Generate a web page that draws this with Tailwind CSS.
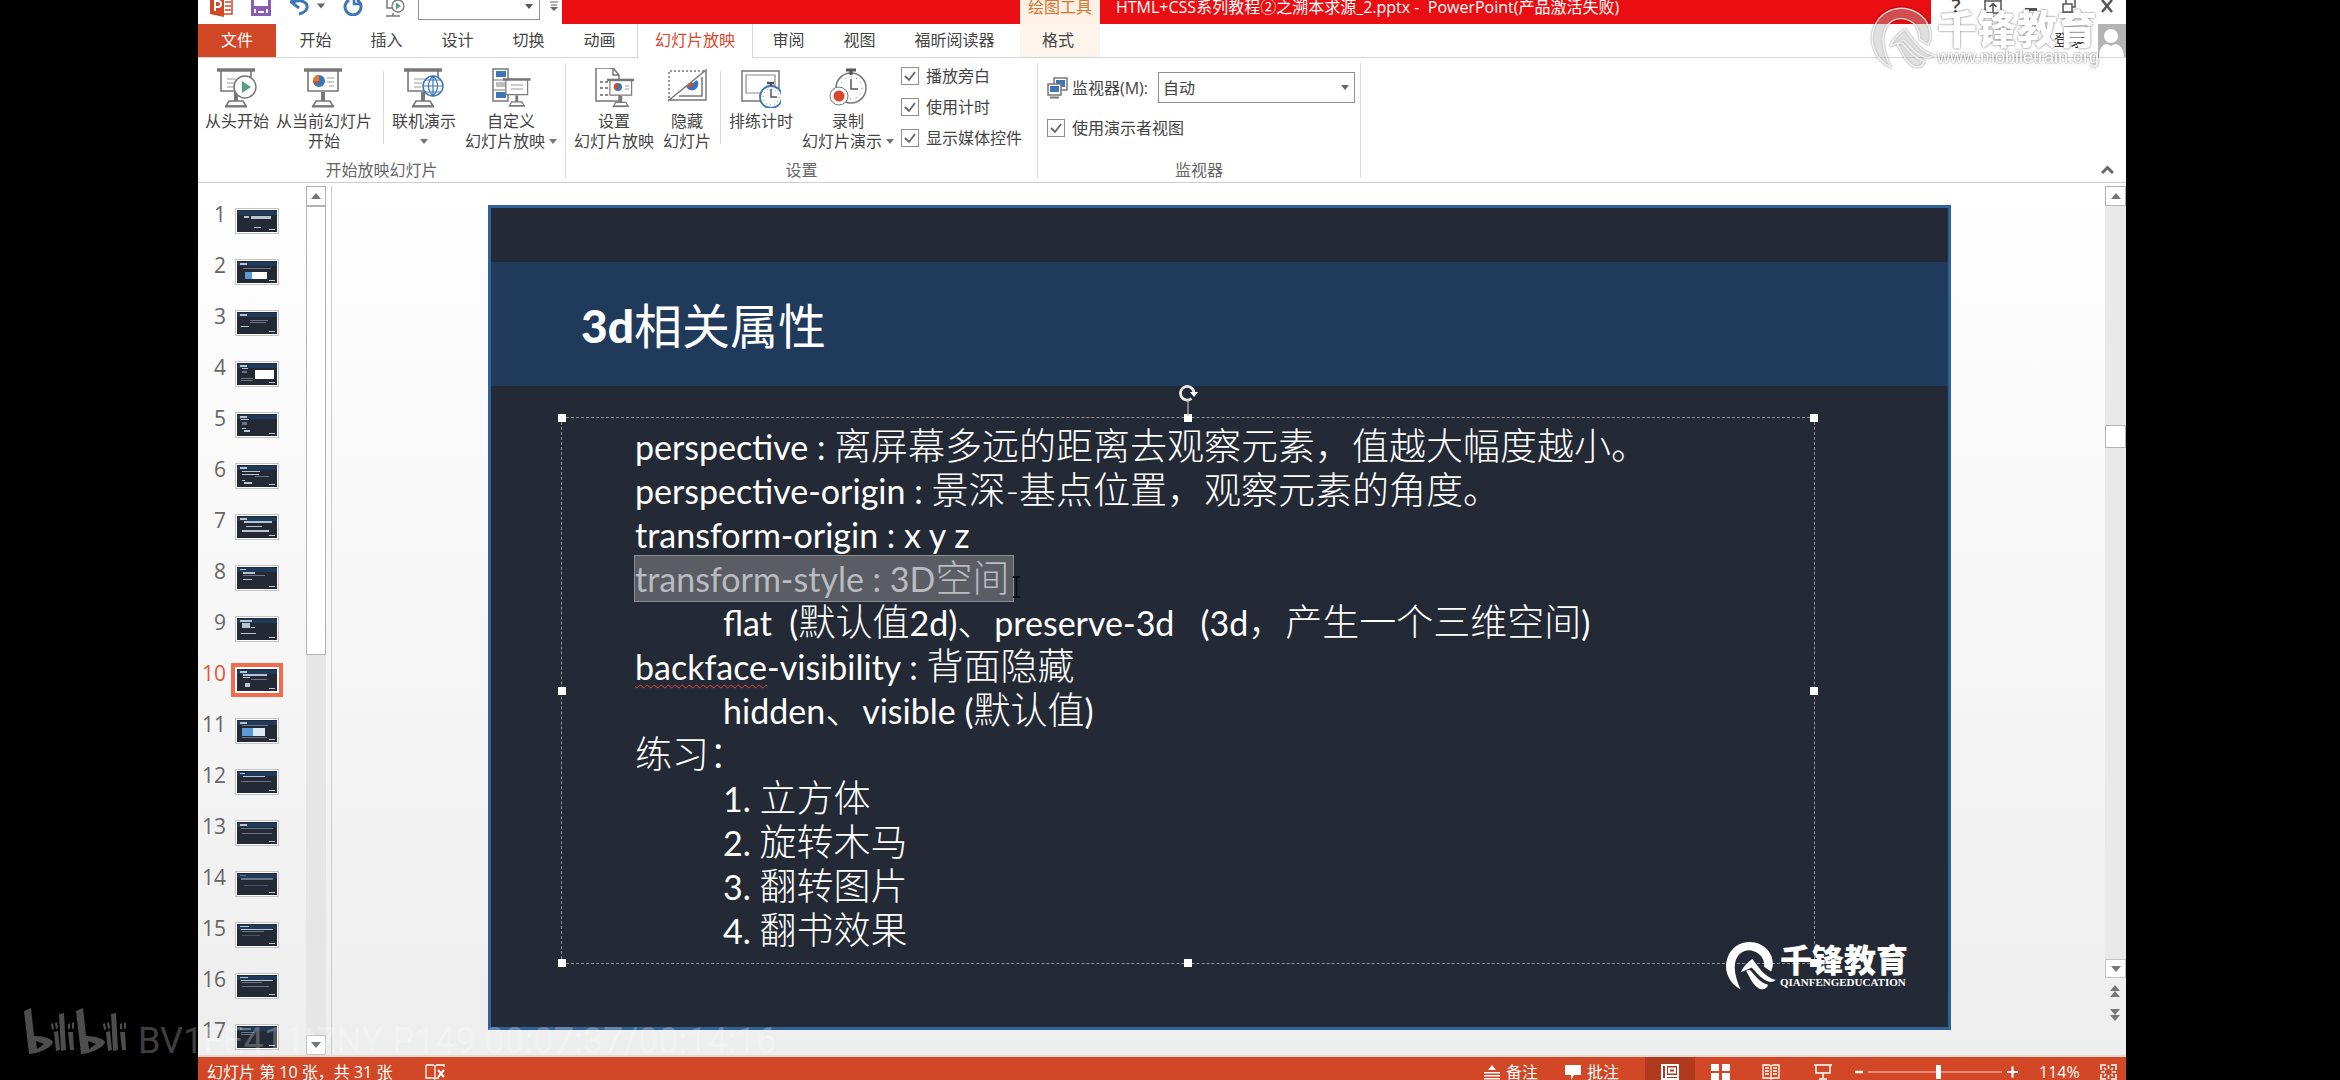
<!DOCTYPE html>
<html lang="zh-CN">
<head>
<meta charset="utf-8">
<title>HTML+CSS系列教程②之溯本求源_2.pptx - PowerPoint</title>
<script src="https://cdn.jsdelivr.net/npm/@tailwindcss/browser@4"></script>
</head>
<body class="relative h-screen overflow-hidden bg-black pl-[198px] pr-[214px] font-['Open_Sans','Noto_Sans_CJK_SC',sans-serif] text-base leading-5 text-[#444444]">

<svg class="hidden" aria-hidden="true">
  <symbol id="board" viewBox="0 0 40 40">
    <path d="M4 3v20h30V3" fill="#fff" stroke="#777" stroke-width="1.6"/>
    <path d="M0 2h38" stroke="#777" stroke-width="3.5"/>
    <path d="M19 24v9" stroke="#777" stroke-width="4"/>
    <path d="M12 33h14l3 5H9z" fill="#fff" stroke="#777" stroke-width="1.6"/>
    <path d="M8 38.500h22" stroke="#777" stroke-width="2"/>
  </symbol>
  <symbol id="qf-mark" viewBox="0 0 64 64">
    <path d="M20 62C4 54-2 36 3 22 8 6 24-1 38 2c14 3 25 15 23 31-1 3-1 4-2 6l-9-6c1-9-4-17-13-20-11-4-22 3-24 15-2 11 2 23 7 34z"/>
    <path d="M20 40c4-8 9-13 15-17 8 10 14 22 30 27-4 3-8 3-12 1-8-4-13-11-19-17-4 2-8 4-14 6z"/>
    <path d="M27 38c3-1 5-1 6 0 7 8 12 15 22 18-1 5-6 7-11 5-8-4-12-14-17-23z"/>
  </symbol>
</svg>

<div class="relative flex h-full flex-col bg-white">

  <!-- title bar -->
  <header class="flex h-6 shrink-0 items-stretch">
    <div class="flex w-[364px] items-center pb-3 pl-3">
      <svg class="h-[21px] w-[23px]" viewBox="0 0 23 21"><path d="M11 1h11v17H11z" fill="#fff" stroke="#d24726" stroke-width="1.500"/><path d="M15 6h6M15 10h6M15 14h6" stroke="#d24726" stroke-width="1.500"/><path d="M0 2l14-2v21L0 18z" fill="#d24726"/><path d="M5 15V5h3q3 0 3 3t-3 3H5" fill="none" stroke="#fff" stroke-width="2"/></svg>
      <svg class="ml-[18px] h-[20px] w-[20px]" viewBox="0 0 20 20"><path d="M1.500 0v18.500h17V0" fill="#fff" stroke="#8a5cb5" stroke-width="3"/><path d="M1 10h18v3H1z" fill="#8a5cb5"/><path d="M6 18v-4h8v4" fill="none" stroke="#8a5cb5" stroke-width="2"/></svg>
      <svg class="ml-[19px] h-[20px] w-[20px]" viewBox="0 0 20 20"><path d="M3 6c8-3 15 0 14 6-1 4-4 5-8 6" fill="none" stroke="#3d76b8" stroke-width="3"/><path d="M8 0L1 6l8 6" fill="none" stroke="#3d76b8" stroke-width="3"/></svg>
      <svg class="ml-[7px] h-[6px] w-[8px]" viewBox="0 0 8 5"><path d="M0 0h8L4 5z" fill="#666"/></svg>
      <svg class="ml-[18px] h-[20px] w-[20px]" viewBox="0 0 20 20"><path d="M14 4a8 8 0 1 1-8 0" fill="none" stroke="#3d76b8" stroke-width="3"/><path d="M11 0v8h8" fill="none" stroke="#3d76b8" stroke-width="2.500"/></svg>
      <svg class="ml-[22px] h-[22px] w-[20px]" viewBox="0 0 20 22"><path d="M2 0v13h5M1 21h14M8 18v3" fill="none" stroke="#777" stroke-width="1.500"/><circle cx="13" cy="11" r="6" fill="#fff" stroke="#777" stroke-width="1.300"/><path d="M11 7.500v7l5-3.500z" fill="#52a180"/></svg>
      <div class="ml-[13px] flex h-[27px] w-[122px] items-center justify-end border border-[#8f8f8f] pr-1.5">
        <svg class="h-[5px] w-[8px]" viewBox="0 0 8 5"><path d="M0 0h8L4 5z" fill="#555"/></svg>
      </div>
      <svg class="ml-[10px] h-[10px] w-[8px]" viewBox="0 0 8 10"><path d="M0 1h8M1 4h6" stroke="#666" stroke-width="1.200"/><path d="M0 6h8L4 10z" fill="#666"/></svg>
    </div>
    <div class="w-[458px] bg-[#ea0d11]"></div>
    <div class="flex w-[80px] items-center justify-center bg-[#fdf0e4] pb-2.5 text-[#d8742e]">绘图工具</div>
    <div class="flex min-w-0 flex-1 items-center bg-[#ea0d11] pb-2.5 pl-4 whitespace-pre text-white">HTML+CSS系列教程②之溯本求源_2.pptx -  PowerPoint(产品激活失败)</div>
    <div class="flex w-[195px] items-center justify-end gap-[20px] pr-2.5 pb-3">
      <span class="w-4 text-center text-xl font-semibold">?</span>
      <svg class="h-[16px] w-[18px]" viewBox="0 0 18 16" fill="none" stroke="#555" stroke-width="1.500"><path d="M1 0v15h16V0M1 3h16M9 14V6M5.500 9L9 5.500 12.500 9"/></svg>
      <svg class="h-[16px] w-[18px]" viewBox="0 0 18 16"><path d="M3 10h12v3H3z" fill="#555"/></svg>
      <svg class="h-[16px] w-[18px]" viewBox="0 0 18 16" fill="none" stroke="#555" stroke-width="1.500"><path d="M3 6h9v8H3zM6 6V1h9v8h-3"/></svg>
      <svg class="h-[16px] w-[18px]" viewBox="0 0 18 16"><path d="M4 2l10 12M14 2L4 14" stroke="#555" stroke-width="2.500"/></svg>
    </div>
  </header>

  <!-- ribbon tabs -->
  <nav class="flex h-[34px] shrink-0 border-b border-[#d5d5d5] text-center">
    <button class="mr-[4px] w-[78px] bg-[#d24726] pb-0.5 text-white">文件</button>
    <button class="w-[71px] pb-0.5">开始</button>
    <button class="w-[71px] pb-0.5">插入</button>
    <button class="w-[71px] pb-0.5">设计</button>
    <button class="w-[71px] pb-0.5">切换</button>
    <button class="w-[71px] pb-0.5">动画</button>
    <button class="-mb-px ml-0.5 w-[116px] border-x border-[#d5d5d5] bg-white pb-0.5 text-[#d9472b]">幻灯片放映</button>
    <button class="w-[71px] pb-0.5">审阅</button>
    <button class="w-[71px] pb-0.5">视图</button>
    <button class="w-[125px] pr-1.5 pb-0.5">福昕阅读器</button>
    <button class="w-[80px] bg-[#fdf5ec] pr-1 pb-0.5">格式</button>
    <div class="flex flex-1 items-center justify-end gap-3">
      <a href="#" class="pb-0.5 text-[#333]">登录</a>
      <svg class="h-[33px] w-[28px]" viewBox="0 0 28 33"><path d="M0 0h28v33H0z" fill="#b4b4b4"/><circle cx="13" cy="12" r="7" fill="#fff"/><path d="M1 33c0-9 4-13 8-13l4 2 4-2c4 0 9 4 9 13z" fill="#fff"/></svg>
    </div>
  </nav>

  <!-- ribbon -->
  <section class="flex h-[125px] shrink-0 border-b border-[#cfcfcf] pt-[5px] pb-1">
    <div class="flex w-[368px] flex-col border-r border-[#dcdcdc]">
      <div class="flex h-[99px] items-start pl-[3px]">
        <button class="flex w-[72px] flex-col items-center pt-[5px]">
          <svg class="mb-[3px] h-10 w-10" viewBox="0 0 40 40"><use href="#board" width="40" height="40"/><path d="M10 11h9M10 15h7M10 19h7" stroke="#999" stroke-width="1.200"/><circle cx="28" cy="19" r="11" fill="#fff" stroke="#777" stroke-width="1.500"/><path d="M25 13v12l9-6z" fill="#52a180"/></svg>
          从头开始
        </button>
        <button class="flex w-[102px] flex-col items-center pt-[5px]">
          <svg class="mb-[3px] h-10 w-10" viewBox="0 0 40 40"><use href="#board" width="40" height="40"/><circle cx="15" cy="13" r="6" fill="#3d76b8"/><path d="M15 13V7a6 6 0 0 0-4 10z" fill="#d9472b"/><path d="M15 7v6l-6 0a6 6 0 0 1 6-6" fill="#e8762c"/><path d="M23 10h7M23 14h7M25 18h5" stroke="#999" stroke-width="1.200"/></svg>
          <span>从当前幻灯片<br>开始</span>
        </button>
        <div class="mt-2 ml-[8px] h-[73px] w-px bg-[#d9d9d9]"></div>
        <button class="flex w-[80px] flex-col items-center pt-[5px]">
          <svg class="mb-[3px] h-10 w-10" viewBox="0 0 40 40"><use href="#board" width="40" height="40"/><path d="M10 11h12M10 15h8M10 19h7" stroke="#999" stroke-width="1.200"/><circle cx="29" cy="18" r="10" fill="#fff" stroke="#3d76b8" stroke-width="1.500"/><path d="M19 18h20M21 12h16M21 24h16M29 8v20M29 8c-6 6-6 14 0 20M29 8c6 6 6 14 0 20" fill="none" stroke="#3d76b8" stroke-width="1.200"/></svg>
          联机演示
          <svg class="mt-2 h-[5px] w-[8px]" viewBox="0 0 8 5"><path d="M0 0h8L4 5z" fill="#777"/></svg>
        </button>
        <button class="flex w-[94px] flex-col items-center pt-[5px] whitespace-nowrap">
          <svg class="mb-[3px] h-10 w-10" viewBox="0 0 40 40"><path d="M2 1h15v32H2z" fill="#fff" stroke="#777" stroke-width="1.500"/><path d="M5 3h10v6H5zM5 24h10v6H5z" fill="#3d76b8"/><path d="M5 14h10v5H5z" fill="#bbb"/><path d="M2 12h15M2 22h15" stroke="#777"/><use href="#board" x="12" y="9" width="29" height="31"/><path d="M20 17h12M20 21h12" stroke="#999"/></svg>
          自定义
          <span class="flex items-center gap-1">幻灯片放映<svg class="h-[5px] w-[8px]" viewBox="0 0 8 5"><path d="M0 0h8L4 5z" fill="#777"/></svg></span>
        </button>
      </div>
      <div class="h-4 text-center leading-4 text-[#666]">开始放映幻灯片</div>
    </div>

    <div class="flex w-[472px] flex-col border-r border-[#dcdcdc]">
      <div class="flex h-[99px] items-start pl-[3px]">
        <button class="flex w-[90px] flex-col items-center pt-[5px]">
          <svg class="mb-[3px] h-10 w-10" viewBox="0 0 40 40"><path d="M2 0h17l6 7v26H2z" fill="#fff" stroke="#777" stroke-width="1.500"/><path d="M19 0v7h6" fill="none" stroke="#777" stroke-width="1.500"/><path d="M6 14h3M11 14h3M6 20h3M11 20h3M6 27h3M11 27h3" stroke="#888" stroke-width="2"/><use href="#board" x="13" y="10" width="29" height="30"/><circle cx="24" cy="19" r="4" fill="#3d76b8"/><path d="M24 19v-4a4 4 0 0 0-3 7z" fill="#d9472b"/><path d="M31 18h4M31 21h4" stroke="#999"/></svg>
          <span>设置<br>幻灯片放映</span>
        </button>
        <button class="flex w-[56px] flex-col items-center pt-[5px]">
          <svg class="mb-[3px] h-10 w-10" viewBox="0 0 40 40"><path d="M2 30V3h36" fill="none" stroke="#777" stroke-width="1.500" stroke-dasharray="2 2"/><path d="M1 33L39 2v30H1M12 28h23V9" fill="none" stroke="#777" stroke-width="1.500"/><path d="M19 20L30 12a6 6 0 1 1-10 8" fill="#3d76b8"/><path d="M19 19l6-5v5z" fill="#d9472b"/></svg>
          <span>隐藏<br>幻灯片</span>
        </button>
        <div class="mt-2 ml-[5px] h-[73px] w-px bg-[#d9d9d9]"></div>
        <button class="flex w-[80px] flex-col items-center pt-[5px]">
          <svg class="mb-[3px] h-10 w-10" viewBox="0 0 40 40"><path d="M1 3h37v30H1z" fill="#fff" stroke="#777" stroke-width="1.500"/><path d="M5 7h29v18H5z" fill="none" stroke="#888" stroke-width="1.200"/><circle cx="30" cy="29" r="11" fill="#fff" stroke="#3d76b8" stroke-width="1.800"/><path d="M26 15h7M30 15v3" stroke="#555" stroke-width="2.500"/><path d="M30 21v8h6" fill="none" stroke="#555" stroke-width="1.500"/><circle cx="30" cy="29" r="8" fill="none" stroke="#777" stroke-dasharray="1 3.200"/></svg>
          排练计时
        </button>
        <button class="flex w-[94px] flex-col items-center pt-[5px] whitespace-nowrap">
          <svg class="mb-[3px] h-10 w-10" viewBox="0 0 40 40"><circle cx="23" cy="20" r="15" fill="#fff" stroke="#777" stroke-width="1.500"/><path d="M18 2h10M23 2v5" stroke="#555" stroke-width="3"/><path d="M23 11v10h7" fill="none" stroke="#555" stroke-width="1.500"/><circle cx="23" cy="20" r="11" fill="none" stroke="#777" stroke-dasharray="1 4.700"/><circle cx="11" cy="28" r="9" fill="#fff" stroke="#777"/><circle cx="11" cy="28" r="5.500" fill="#d9472b"/></svg>
          录制
          <span class="flex items-center gap-1">幻灯片演示<svg class="h-[5px] w-[8px]" viewBox="0 0 8 5"><path d="M0 0h8L4 5z" fill="#777"/></svg></span>
        </button>
        <div class="ml-[6px] flex flex-col gap-[5px]">
          <label class="flex h-[26px] items-center gap-[7px]"><span class="grid"><input type="checkbox" checked class="col-start-1 row-start-1 size-[18px] appearance-none border border-[#8f8f8f] bg-white"><svg class="pointer-events-none col-start-1 row-start-1 size-[18px]" viewBox="0 0 18 18"><path d="M4 9l4 4 6-8" fill="none" stroke="#666" stroke-width="1.800"/></svg></span>播放旁白</label>
          <label class="flex h-[26px] items-center gap-[7px]"><span class="grid"><input type="checkbox" checked class="col-start-1 row-start-1 size-[18px] appearance-none border border-[#8f8f8f] bg-white"><svg class="pointer-events-none col-start-1 row-start-1 size-[18px]" viewBox="0 0 18 18"><path d="M4 9l4 4 6-8" fill="none" stroke="#666" stroke-width="1.800"/></svg></span>使用计时</label>
          <label class="flex h-[26px] items-center gap-[7px]"><span class="grid"><input type="checkbox" checked class="col-start-1 row-start-1 size-[18px] appearance-none border border-[#8f8f8f] bg-white"><svg class="pointer-events-none col-start-1 row-start-1 size-[18px]" viewBox="0 0 18 18"><path d="M4 9l4 4 6-8" fill="none" stroke="#666" stroke-width="1.800"/></svg></span>显示媒体控件</label>
        </div>
      </div>
      <div class="h-4 text-center leading-4 text-[#666]">设置</div>
    </div>

    <div class="flex w-[323px] flex-col border-r border-[#dcdcdc]">
      <div class="flex h-[99px] flex-col gap-3 pt-[9px] pl-[9px]">
        <div class="flex h-[31px] items-center">
          <svg class="h-[22px] w-[21px]" viewBox="0 0 21 22"><path d="M7 1h13v12H7z" fill="#fff" stroke="#777" stroke-width="1.500"/><path d="M9 3h9v7H9z" fill="#3d76b8"/><path d="M1 7h13v11H1z" fill="#fff" stroke="#777" stroke-width="1.500"/><path d="M3 9h9v6H3z" fill="#3d76b8"/><path d="M3 20.500h9" stroke="#777" stroke-width="2"/></svg>
          <label for="monitor" class="ml-1 w-[86px] whitespace-nowrap">监视器(M):</label>
          <span class="grid items-center">
            <select id="monitor" class="col-start-1 row-start-1 h-[31px] w-[197px] appearance-none border border-[#8f8f8f] bg-white pl-1"><option>自动</option></select>
            <svg class="pointer-events-none col-start-1 row-start-1 mr-1.5 h-[5px] w-[8px] justify-self-end" viewBox="0 0 8 5"><path d="M0 0h8L4 5z" fill="#666"/></svg>
          </span>
        </div>
        <label class="flex h-[26px] items-center gap-[7px]"><span class="grid"><input type="checkbox" checked class="col-start-1 row-start-1 size-[18px] appearance-none border border-[#8f8f8f] bg-white"><svg class="pointer-events-none col-start-1 row-start-1 size-[18px]" viewBox="0 0 18 18"><path d="M4 9l4 4 6-8" fill="none" stroke="#666" stroke-width="1.800"/></svg></span>使用演示者视图</label>
      </div>
      <div class="h-4 text-center leading-4 text-[#666]">监视器</div>
    </div>

    <div class="flex flex-1 items-end justify-end pr-3 pb-1">
      <svg class="h-[9px] w-[13px]" viewBox="0 0 13 9"><path d="M1 8l5.500-5.500L12 8" fill="none" stroke="#666" stroke-width="3"/></svg>
    </div>
  </section>

  <!-- workspace -->
  <main class="flex min-h-0 flex-1 overflow-hidden border-b-2 border-[#e3d9d6] bg-linear-to-b from-white to-[#eeeeee]">
    <ol id="thumbs" class="w-[108px] pt-[21px] text-[21px]"></ol>
    <div class="mt-[3px] flex w-[20px] flex-col bg-[#e6e6e6]">
      <div class="flex h-[20px] items-center justify-center border border-[#b3b3b3] bg-white"><svg class="h-[6px] w-[10px]" viewBox="0 0 10 6"><path d="M0 6h10L5 0z" fill="#777"/></svg></div>
      <div class="h-[449px] border border-[#b3b3b3] bg-white"></div>
      <div class="mt-auto flex h-[20px] items-center justify-center border border-[#c3c3c3] bg-white"><svg class="h-[6px] w-[10px]" viewBox="0 0 10 6"><path d="M0 0h10L5 6z" fill="#777"/></svg></div>
    </div>
    <div class="mt-[3px] ml-[5px] w-px bg-[#cccccc]"></div>

    <div class="min-w-0 flex-1 pt-[22px] pr-[154px] pl-[156px]">
      <article class="relative border-[3px] border-[#2f6299] bg-[#242a35] pt-[54px] pb-[63px] text-white">
        <h1 class="flex h-[124px] items-center bg-[#203a5c] pt-1 pl-[90px] text-5xl font-normal"><span class="font-['Lato'] text-[46px] font-black">3d</span>相关属性</h1>
        <div class="relative mt-[31px] mr-[133px] ml-[70px] border border-dashed border-[#8d9198] pt-[6px] pb-[11px] pl-[73px] font-['Lato','Noto_Sans_CJK_SC',sans-serif] text-[37px] leading-[44px] font-light [&>p]:whitespace-pre">
          <p class="h-11"><span class="text-[34px] font-normal">perspective : </span>离屏幕多远的距离去观察元素，值越大幅度越小。</p>
          <p class="h-11"><span class="text-[34px] font-normal">perspective-origin : </span>景深-基点位置，观察元素的角度。</p>
          <p class="h-11"><span class="text-[34px] font-normal">transform-origin : x y z</span></p>
          <p class="-ml-px flex h-11"><span class="-mt-px h-[47px] border border-[#8b8e93] bg-[#5a5d63] pr-1 text-[#b8bbc0]"><span class="text-[34px] font-normal">transform-style : 3D</span>空间</span></p>
          <p class="h-11 pl-[88px]"><span class="text-[34px] font-normal">flat  (</span>默认值<span class="text-[34px] font-normal">2d)</span>、<span class="text-[34px] font-normal">preserve-3d   (3d</span>，产生一个三维空间<span class="text-[34px] font-normal">)</span></p>
          <p class="h-11"><span class="text-[34px] font-normal"><span class="underline decoration-[#e0413a] decoration-wavy decoration-1 underline-offset-4">backface</span>-visibility : </span>背面隐藏</p>
          <p class="h-11 pl-[88px]"><span class="text-[34px] font-normal">hidden</span>、<span class="text-[34px] font-normal">visible (</span>默认值<span class="text-[34px] font-normal">)</span></p>
          <p class="h-11">练习：</p>
          <p class="h-11 pl-[88px]"><span class="text-[34px] font-normal">1. </span>立方体</p>
          <p class="h-11 pl-[88px]"><span class="text-[34px] font-normal">2. </span>旋转木马</p>
          <p class="h-11 pl-[88px]"><span class="text-[34px] font-normal">3. </span>翻转图片</p>
          <p class="h-11 pl-[88px]"><span class="text-[34px] font-normal">4. </span>翻书效果</p>
          <i class="absolute -top-1 -left-1 size-2 bg-white"></i>
          <i class="absolute -top-1 left-1/2 -ml-1 size-2 bg-white"></i>
          <i class="absolute -top-1 -right-1 size-2 bg-white"></i>
          <i class="absolute top-1/2 -left-1 -mt-1 size-2 bg-white"></i>
          <i class="absolute top-1/2 -right-1 -mt-1 size-2 bg-white"></i>
          <i class="absolute -bottom-1 -left-1 size-2 bg-white"></i>
          <i class="absolute -bottom-1 left-1/2 -ml-1 size-2 bg-white"></i>
          <i class="absolute -right-1 -bottom-1 size-2 bg-white"></i>
          <svg class="absolute -top-[34px] left-1/2 -ml-2.5 h-[32px] w-[20px]" viewBox="0 0 20 32"><path d="M13.500 14.500A6.800 6.800 0 1 1 16 9" fill="none" stroke="#e8e8e8" stroke-width="2.800"/><path d="M12 8h8l-4 5z" fill="#fff"/><path d="M10 16v16" stroke="#bbb" stroke-width="1.200"/></svg>
          <svg class="absolute top-[158px] left-[450px] h-[22px] w-[9px]" viewBox="0 0 9 22"><path d="M1 1h7M1 21h7M4.500 1v20" stroke="#0b0e14" stroke-width="1.800"/></svg>
        </div>
        <div class="absolute right-[40px] bottom-[36px] flex items-center gap-1">
          <svg class="h-[50px] w-[52px]" viewBox="0 0 66 64" fill="#fff"><use href="#qf-mark" width="66" height="64"/></svg>
          <div>
            <div class="text-[32px] leading-8 font-black">千锋教育</div>
            <div class="font-['Liberation_Serif'] text-[11px] leading-3 font-bold">QIANFENGEDUCATION</div>
          </div>
        </div>
      </article>
    </div>

    <div class="mt-[3px] flex w-[21px] flex-col">
      <div class="flex h-[20px] items-center justify-center border border-[#b3b3b3] bg-white"><svg class="h-[6px] w-[10px]" viewBox="0 0 10 6"><path d="M0 6h10L5 0z" fill="#777"/></svg></div>
      <div class="flex flex-1 flex-col bg-[#e9e9e9] pt-[219px]"><div class="h-[23px] border border-[#b3b3b3] bg-white"></div></div>
      <div class="flex h-[19px] items-center justify-center border border-[#c3c3c3] bg-white"><svg class="h-[6px] w-[10px]" viewBox="0 0 10 6"><path d="M0 0h10L5 6z" fill="#777"/></svg></div>
      <svg class="mt-[7px] ml-[5px] h-[12px] w-[10px]" viewBox="0 0 10 12" fill="#777"><path d="M0 6h10L5 0zM0 12h10L5 6z"/></svg>
      <svg class="mt-[12px] mb-[34px] ml-[5px] h-[12px] w-[10px]" viewBox="0 0 10 12" fill="#777"><path d="M0 0h10L5 6zM0 6h10L5 12z"/></svg>
    </div>
  </main>

  <!-- status bar -->
  <footer class="flex h-[23px] shrink-0 items-center overflow-hidden bg-[#d24726] pt-[7px] pr-[9px] pl-[9px] leading-4 text-white">
    <span class="whitespace-pre">幻灯片 第 10 张，共 31 张</span>
    <svg class="ml-[33px] h-[16px] w-[20px]" viewBox="0 0 20 16" fill="none" stroke="#fff" stroke-width="1.300"><path d="M1 1h7l2 1 2-1h7v2M1 1v13h7l2 1 2-1h2M10 2v13"/><path d="M13 6l6 7M19 6l-6 7" stroke-width="2"/></svg>
    <button class="ml-auto flex items-center gap-1.5"><svg class="size-[16px]" viewBox="0 0 16 16" fill="#fff"><path d="M4 6h8L8 1zM0 8h16v1.500H0zM0 11h16v1.500H0zM0 14h16v1.500H0z"/></svg>备注</button>
    <button class="ml-[27px] flex items-center gap-1.5"><svg class="size-[16px]" viewBox="0 0 16 16" fill="#fff"><path d="M0 1h16v10H9l-3 5v-5H0z"/></svg>批注</button>
    <span class="-my-2 ml-[26px] flex h-8 w-[50px] items-center justify-center bg-[#b03a1e]"><svg class="h-[16px] w-[18px]" viewBox="0 0 18 16" fill="none" stroke="#fff" stroke-width="2"><path d="M1 1h16v14H1zM5 1v14M8 4.500h6v4H8zM5 12h12"/></svg></span>
    <svg class="ml-[16px] h-[16px] w-[19px]" viewBox="0 0 19 16" fill="#fff"><path d="M0 0h8v7H0zM11 0h8v7h-8zM0 9h8v7H0zM11 9h8v7h-8z"/></svg>
    <svg class="ml-[32px] h-[16px] w-[18px]" viewBox="0 0 18 16" fill="none" stroke="#fff" stroke-width="1.300"><path d="M1 1h6l2 1 2-1h6v13h-6l-2 1-2-1H1zM9 2v13M3 4h4M3 7h4M3 10h4M11 4h4M11 7h4M11 10h4"/></svg>
    <svg class="ml-[34px] h-[16px] w-[18px]" viewBox="0 0 18 16" fill="none" stroke="#fff" stroke-width="1.500"><path d="M0 1h18M2 1v8h14V1M9 9v5M5 15h8"/></svg>
    <svg class="ml-[22px] h-[16px] w-[10px]" viewBox="0 0 10 16"><path d="M1 8h8" stroke="#fff" stroke-width="2.500"/></svg>
    <input type="range" value="53" aria-label="缩放" class="ml-[4px] h-4 w-[134px] appearance-none bg-linear-to-b from-transparent from-45% via-white via-50% to-transparent to-55% [&::-webkit-slider-thumb]:h-[14px] [&::-webkit-slider-thumb]:w-[5px] [&::-webkit-slider-thumb]:appearance-none [&::-webkit-slider-thumb]:bg-white">
    <svg class="ml-[5px] h-[16px] w-[11px]" viewBox="0 0 11 16"><path d="M0 8h11M5.500 2.500v11" stroke="#fff" stroke-width="2.200"/></svg>
    <span class="ml-[21px] w-[42px]">114%</span>
    <svg class="ml-[19px] h-[16px] w-[17px]" viewBox="0 0 17 16" fill="none" stroke="#fff" stroke-width="1.500"><path d="M6 1H1v5M11 1h5v5M1 10v5h5M16 10v5h-5M8.500 1v4M8.500 11v4M1 8h4M12 8h4M4 4l2 2M13 4l-2 2M4 12l2-2M13 12l-2-2"/></svg>
  </footer>

  <!-- channel watermark -->
  <div class="pointer-events-none absolute top-[7px] right-[27px] flex items-center gap-0.5 text-white drop-shadow-[0_0_1px_rgba(0,0,0,0.6)]">
    <svg class="h-[62px] w-[66px] opacity-80" viewBox="0 0 66 64"><use href="#qf-mark" width="66" height="64" fill="#fff" fill-opacity="0.35" stroke="#fff" stroke-width="1.500"/></svg>
    <div>
      <div class="text-[40px] leading-[38px] font-black">千锋教育</div>
      <div class="font-['Liberation_Sans'] text-lg leading-[18px]">www.mobiletrain.org</div>
    </div>
  </div>
</div>

<!-- player watermark -->
<div class="pointer-events-none absolute bottom-[19px] left-[24px] flex items-end gap-[12px] font-['Roboto'] text-4xl leading-10 whitespace-pre text-white/25">
  <svg class="mb-[7px] h-[46px] w-[102px]" viewBox="0 0 102 46">
    <g id="bili" fill="#fff" fill-opacity="0.300">
      <path d="M0 3l7-3 3 28c10 0 18 3 19 6-1 5-12 11-24 12zM12 33l1 8 7-5z" fill-rule="evenodd"/>
      <path d="M35 6l5-1 2 37-5 1zM27 16l2-1 1 6-2 1zM31 15l2-1 1 6-2 1zM30 24l4-1 2 19-4 1zM44 16l2-1v6h-2zM48 15l2-1v6l-2 1zM44 24h5l1 18h-4z"/>
    </g>
    <use href="#bili" x="52"/>
  </svg>
  <span>BV1FE411t7NY P149 00:07:37/00:14:16</span>
</div>

<script>
  // Miniature slide contents: [x, y, width, height, colour]
  const w = '#b9c4d2', g = '#6b7583';
  const minis = [
    [[7,6,5,2,w],[14,6,20,3,w],[17,17,7,1,w]],
    [[3,2,7,2,w],[6,7,28,1,g],[8,11,7,7,'#5b9bd5'],[15,11,15,7,'#fff']],
    [[3,2,7,2,w],[13,8,18,1,g],[13,10,16,1,g],[4,14,8,1,w]],
    [[3,2,7,2,w],[5,5,6,1,w],[5,8,5,2,g],[18,7,19,9,'#fff'],[4,15,12,1,g],[4,17,12,1,g]],
    [[3,2,7,2,w],[4,5,8,1,w],[5,8,5,3,g],[5,14,4,1,w],[7,16,6,2,w]],
    [[3,2,7,2,w],[5,6,18,1,w],[5,9,17,1,w],[18,11,14,1,g],[5,15,3,1,w],[7,17,8,2,w]],
    [[3,2,7,2,w],[7,5,28,2,w],[9,10,16,1,w],[5,14,27,2,w]],
    [[3,2,6,1,w],[6,5,12,2,w],[6,8,22,1,g],[6,12,9,1,w]],
    [[3,2,12,2,w],[5,5,8,5,w],[14,9,4,1,w],[4,15,15,1,w]],
    [[3,2,7,2,w],[6,5,24,2,w],[6,8,7,1,w],[14,10,16,1,g],[8,14,5,4,w]],
    [[3,2,7,2,w],[5,5,26,1,g],[5,8,11,8,'#5b9bd5'],[16,8,12,8,'#dce9f7'],[5,17,25,1,g]],
    [[3,2,5,1,w],[6,5,22,1,w],[4,10,30,1,g]],
    [[3,2,7,2,w],[4,6,32,1,g],[5,11,30,1,g]],
    [[3,2,6,1,g],[4,5,32,2,g],[7,12,24,1,'#4b5563']],
    [[3,2,9,1,w],[4,5,32,1,w],[5,7,22,1,g],[5,11,18,1,'#4b5563']],
    [[3,2,8,1,w],[4,5,32,1,w],[5,7,20,1,g],[5,11,27,1,g]],
    [[3,2,11,2,g],[4,6,13,1,g],[4,8,11,1,g]]
  ];
  document.getElementById('thumbs').innerHTML = minis.map((m, i) => {
    const on = i === 9;
    const bars = m.map(b => `<rect x="${b[0]}" y="${b[1]}" width="${b[2]}" height="${b[3]}" fill="${b[4]}"/>`).join('');
    return `<li class="flex h-[51px] items-start gap-[9px]">
      <span class="${on ? 'w-[28px] text-right text-[#e2563a]' : 'w-[28px] text-right text-[#666666]'}">${i + 1}</span>
      <span class="${on ? 'mt-[4px] border border-white bg-white p-px outline-4 outline-[#ef6c4d]' : 'mt-[4px] border border-[#c4c4c4] bg-white p-px'}">
        <svg class="h-[22px] w-[40px]" viewBox="0 0 40 22"><rect width="40" height="22" fill="#242a35"/><rect y="1" width="40" height="4" fill="#203a5c"/>${bars}<rect x="32" y="19" width="6" height="1" fill="#c5cbd3"/></svg>
      </span></li>`;
  }).join('');
</script>
</body>
</html>
